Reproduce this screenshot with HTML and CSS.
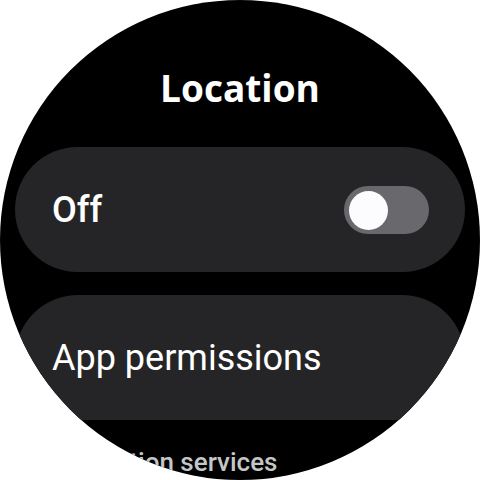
FILE: index.html
```html
<!DOCTYPE html>
<html>
<head>
<meta charset="utf-8">
<link rel="stylesheet" href="styles.css">
</head>
<body>
<div class="watch">
  <h1 class="title">Location</h1>
  <div class="card card-toggle">
    <span class="label">Off</span>
    <span class="switch"><span class="thumb"></span></span>
  </div>
  <div class="card card-cut">
    <span class="label light">App permissions</span>
  </div>
  <div class="section">Location services</div>
</div>
</body>
</html>
```

FILE: styles.css
```css
html, body {
  margin: 0;
  padding: 0;
  background: #ffffff;
}
.watch {
  width: 480px;
  height: 480px;
  border-radius: 50%;
  background: #000000;
  overflow: hidden;
  display: flex;
  flex-direction: column;
  align-items: center;
  font-family: Roboto, "Open Sans", sans-serif;
  color: #ffffff;
}
.title {
  margin: 66px 0 0 0;
  height: 44px;
  line-height: 44px;
  font-size: 37px;
  font-weight: 700;
  text-align: center;
  font-family: "Open Sans", Roboto, sans-serif;
}
.card {
  box-sizing: border-box;
  width: 450px;
  height: 125px;
  background: #252527;
  border-radius: 63px;
  display: flex;
  align-items: center;
  justify-content: space-between;
  padding: 0 36px 0 37px;
  flex-shrink: 0;
}
.card-toggle {
  margin-top: 37px;
}
.card-cut {
  margin-top: 23px;
  border-radius: 63px 63px 0 0;
}
.label {
  font-size: 36px;
  font-weight: 500;
  line-height: 44px;
}
.label.light {
  font-weight: 400;
}
.switch {
  position: relative;
  width: 85px;
  height: 48px;
  border-radius: 24px;
  background: #69686d;
}
.thumb {
  position: absolute;
  left: 5px;
  top: 5px;
  width: 39px;
  height: 39px;
  border-radius: 50%;
  background: #fcfcff;
}
.section {
  align-self: flex-start;
  margin: 26px 0 0 73px;
  font-size: 26px;
  font-weight: 500;
  line-height: 32px;
  color: #c4c6c8;
  white-space: nowrap;
}
```
